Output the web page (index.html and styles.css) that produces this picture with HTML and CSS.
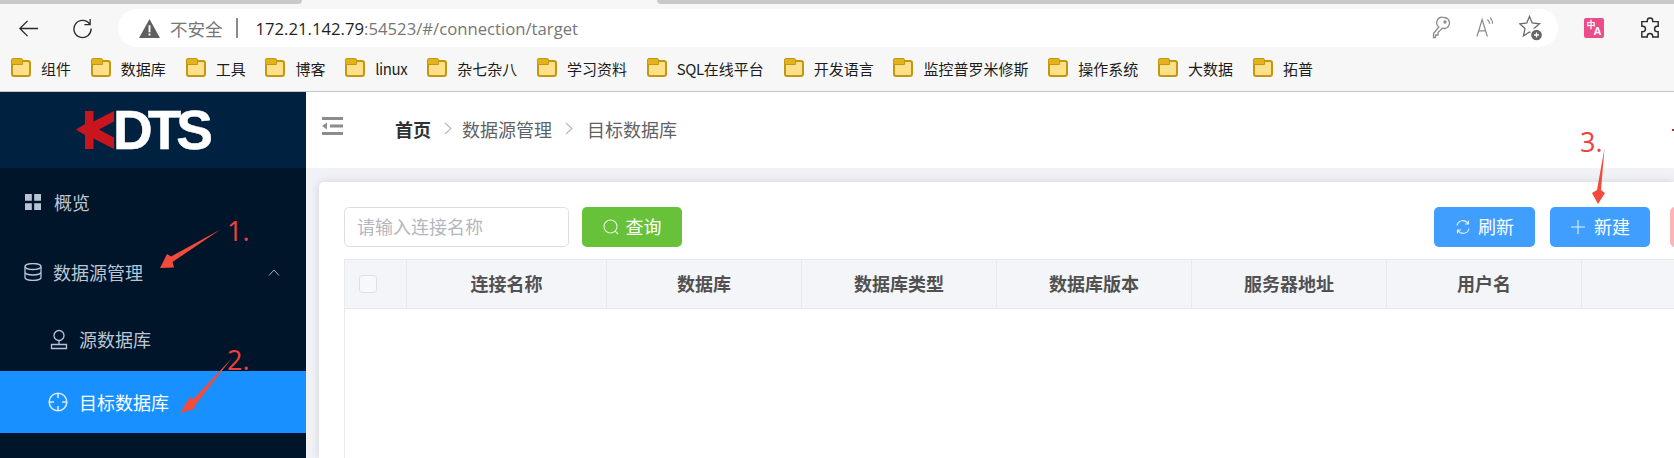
FILE: index.html
```html
<!DOCTYPE html>
<html lang="zh">
<head>
<meta charset="utf-8">
<title>KDTS</title>
<link rel="stylesheet" href="styles.css">
</head>
<body>
<div class="tabstrip"><span class="tab-a"></span><span class="tab-gap"></span><span class="tab-b"></span></div>
<div class="toolbar">
  <svg class="tool back" viewBox="0 0 22 22"><path d="M21 11H2M10 3l-8 8 8 8"/></svg>
  <svg class="tool reload" viewBox="0 0 22 22"><path d="M18.500 6.500A9 9 0 1 0 20 11M19 1v6h-6"/></svg>
  <div class="omnibox">
    <svg class="warn" viewBox="0 0 22 20"><path d="M11 0l11 20H0z" fill="#5f5f5f"/><path d="M10 6.500h2v7.500h-2zM10 15.300h2v2h-2z" fill="#fff"/></svg>
    <span class="insecure">不安全</span>
    <span class="bar"></span>
    <span class="url"><b>172.21.142.79</b>:54523/#/connection/target</span>
    <span class="omni-icons">
      <svg class="o-ic key" viewBox="0 0 18 24"><path d="M12 1.500a5.500 5.500 0 1 1-1.800 10.700L6 16.500v2.500H3.500v2.500H1.500V17.500l5.300-6.500A5.500 5.500 0 0 1 12 1.500z"/><circle cx="13" cy="6" r="1"/></svg>
      <svg class="o-ic aloud" viewBox="0 0 18 24"><path d="M1 21L6.500 3 12 21M3 15h7M12 3a6 6 0 0 1 2.500 4.500M15 1a9 9 0 0 1 2.500 6.500"/></svg>
      <svg class="o-ic fav" viewBox="0 0 24 26"><path d="M10.500 1.500L13.200 8l7.300.8-5.500 4.800 1.600 6.900-6.100-3.500-6.100 3.800L6 13.600.7 8.800 7.800 8z"/><circle cx="17.500" cy="20" r="6" fill="#666" stroke="#fff"/><path d="M17.500 17.500v5M15 20h5" stroke="#fff"/></svg>
    </span>
  </div>
  <span class="translate"><span class="translate-zh">中</span><span class="translate-a">A</span></span>
  <svg class="tool puzzle" viewBox="0 0 22 24"><path d="M8 4a3 3 0 0 1 6 0v1h6v5h-1a3 3 0 0 0 0 6h1v6h-6v-1a3 3 0 0 0-6 0v1H2v-6h1a3 3 0 0 0 0-6H2V5h6z"/></svg>
</div>
<nav class="bookmarks">
  <a class="bm"><span class="folder"></span>组件</a>
  <a class="bm"><span class="folder"></span>数据库</a>
  <a class="bm"><span class="folder"></span>工具</a>
  <a class="bm"><span class="folder"></span>博客</a>
  <a class="bm"><span class="folder"></span><span class="latin">linux</span></a>
  <a class="bm"><span class="folder"></span>杂七杂八</a>
  <a class="bm"><span class="folder"></span>学习资料</a>
  <a class="bm"><span class="folder"></span><span><span class="latin">SQL</span>在线平台</span></a>
  <a class="bm"><span class="folder"></span>开发语言</a>
  <a class="bm"><span class="folder"></span>监控普罗米修斯</a>
  <a class="bm"><span class="folder"></span>操作系统</a>
  <a class="bm"><span class="folder"></span>大数据</a>
  <a class="bm"><span class="folder"></span>拓普</a>
</nav>
<div class="app">
  <aside class="sidebar">
    <div class="logo">
      <svg class="logo-k" viewBox="0 0 39 40"><path d="M9 1h8.500v10.500L38 1v10.500L23 19.500l15 8V39L17.500 28.500V39H9V25L0 19.500 9 14z" fill="#c9151e"/></svg>
      <span class="logo-text">DTS</span>
    </div>
    <ul class="menu">
      <li class="item overview">
        <svg class="m-ic grid" viewBox="0 0 16 16"><path d="M0 0h6.800v6.800H0zM9.200 0H16v6.800H9.200zM0 9.200h6.800V16H0zM9.200 9.200H16V16H9.200z" fill="#b8c4d6"/></svg>
        <span>概览</span>
      </li>
      <li class="item group">
        <svg class="m-ic db" viewBox="0 0 18 18"><ellipse cx="9" cy="3.500" rx="8" ry="3"/><path d="M1 3.500v11c0 1.700 3.600 3 8 3s8-1.300 8-3v-11M1 9c0 1.700 3.600 3 8 3s8-1.300 8-3"/></svg>
        <span>数据源管理</span>
        <svg class="caret" viewBox="0 0 12 7"><path d="M1 6.500L6 1l5 5.500"/></svg>
      </li>
      <li class="item sub">
        <svg class="m-ic stamp" viewBox="0 0 18 21"><circle cx="9" cy="6.500" r="5"/><path d="M9 11.500V15M1.500 15.500h15v4h-15z"/></svg>
        <span>源数据库</span>
      </li>
      <li class="item sub active">
        <svg class="m-ic target" viewBox="0 0 20 20"><circle cx="10" cy="10" r="8.800"/><path d="M10 1v5M10 14v5M1 10h5M14 10h5"/></svg>
        <span>目标数据库</span>
      </li>
    </ul>
  </aside>
  <main class="main">
    <header class="topbar">
      <svg class="fold" viewBox="0 0 21 18"><path d="M0 0h21v3H0zM0 15h21v3H0zM8 7.500h13v3H8zM0 9l5-3.500v7z" fill="#8c8c8c"/></svg>
      <div class="crumbs">
        <strong>首页</strong>
        <svg class="sep sep-first" viewBox="0 0 8 13"><path d="M1 1l6 5.500L1 12"/></svg>
        <span>数据源管理</span>
        <svg class="sep" viewBox="0 0 8 13"><path d="M1 1l6 5.500L1 12"/></svg>
        <span>目标数据库</span>
      </div>
    </header>
    <div class="content">
      <section class="card">
        <div class="actions">
          <div class="search">请输入连接名称</div>
          <button class="btn green">
            <svg class="b-ic" viewBox="0 0 16 16"><circle cx="7.500" cy="7.500" r="6.500"/><path d="M12 12l3 3"/></svg>查询
          </button>
          <span class="spacer"></span>
          <button class="btn blue wide">
            <svg class="b-ic" viewBox="0 0 16 16"><path d="M2 6.500a6 6 0 0 1 11-2M14 9.500a6 6 0 0 1-11 2M13.500 1.500v3.500H10M2.500 14.500V11H6"/></svg>刷新
          </button>
          <button class="btn blue">
            <svg class="b-ic plus" viewBox="0 0 16 16"><path d="M8 1v14M1 8h14"/></svg>新建
          </button>
          <button class="btn pink"></button>
        </div>
        <div class="table">
          <div class="thead">
            <div class="th check"><span class="box"></span></div>
            <div class="th name">连接名称</div>
            <div class="th">数据库</div>
            <div class="th">数据库类型</div>
            <div class="th">数据库版本</div>
            <div class="th">服务器地址</div>
            <div class="th">用户名</div>
            <div class="th"></div>
          </div>
        </div>
      </section>
    </div>
  </main>
</div>
<svg class="marks" viewBox="0 0 1674 458">
  <path class="arrow" d="M220.500 229.500L171 256.500 167 254 160 268 174 267.500 172.500 262z"/>
  <path class="arrow" d="M232 358L193 399.500 190 397 180 413 194 409 196 404z"/>
  <path class="arrow" d="M1604.500 148L1597 190 1592 193 1598 204 1605 193 1601 190z"/>
  <path class="tick" d="M1672 129h2v2h-2z"/>
</svg>
<span class="note n1">1.</span>
<span class="note n2">2.</span>
<span class="note n3">3.</span>
</body>
</html>
```

FILE: styles.css
```css
* { box-sizing: border-box; }
html, body { margin: 0; height: 458px; overflow: hidden; }
body {
  position: relative;
  width: 1674px;
  background: #f7f7f7;
  font-family: "Noto Sans CJK SC", "Noto Sans", sans-serif;
  display: flex;
  flex-direction: column;
}
ul { list-style: none; margin: 0; padding: 0; }

.tabstrip { height: 9px; display: flex; flex: none; }
.tab-a { width: 302px; height: 4px; background: #c9c9c9; border-radius: 0 0 4px 0; }
.tab-gap { width: 355px; }
.tab-b { flex: 1; height: 4px; background: #c9c9c9; border-radius: 0 0 0 4px; }

.toolbar { height: 38px; flex: none; display: flex; align-items: center; position: relative; padding-left: 18px; }
.tool { fill: none; stroke: #2b2b2b; stroke-width: 1.400; flex: none; }
.back { width: 21px; height: 21px; margin-right: 33px; }
.reload { width: 21px; height: 21px; margin-right: 25px; }
.omnibox {
  width: 1440px; height: 38px; background: #fff; border-radius: 19px;
  display: flex; align-items: center; padding-left: 21px; flex: none;
}
.warn { width: 21px; height: 19px; margin-right: 10px; flex: none; }
.insecure { font-size: 17.500px; color: #767676; }
.bar { width: 2px; height: 20px; background: #8a8a8a; margin: 0 18px 0 13px; }
.url { font-family: "Open Sans", sans-serif; font-size: 16.700px; color: #767676; white-space: nowrap; }
.url b { font-weight: 400; color: #1f1f1f; }
.omni-icons { margin-left: auto; display: flex; align-items: center; gap: 26px; padding-right: 15px; }
.o-ic { fill: none; stroke: #8b8b8b; stroke-width: 1.300; flex: none; }
.key { width: 18px; height: 24px; }
.aloud { width: 17px; height: 24px; }
.fav { width: 24px; height: 26px; stroke: #6a6a6a; }
.translate {
  width: 20px; height: 20px; margin-left: 26px; padding: 2px 1px; background: #ec4c89; border-radius: 2px; color: #fff;
  font-size: 9px; line-height: 9px; font-weight: 700; display: flex; justify-content: center; flex: none;
}
.translate-zh { align-self: flex-start; }
.translate-a { align-self: flex-end; font-family: "Liberation Sans", sans-serif; font-size: 11px; margin-left: -2px; }
.puzzle { width: 20px; height: 22px; margin-left: 36px; stroke-width: 1.600; }

.bookmarks { height: 45px; flex: none; display: flex; align-items: center; gap: 19.800px; padding: 0 0 2px 11px; border-bottom: 1px solid #c6c6c6; }
.bm { display: flex; align-items: center; gap: 10px; font-size: 15px; color: #1c1c1c; white-space: nowrap; }
.latin { letter-spacing: -.4px; }
.folder {
  position: relative; width: 20px; height: 17px; background: #ffe08a; border: 2px solid #c3970f; border-radius: 3px; flex: none; margin-top: 1px;
}
.folder::before {
  content: ""; position: absolute; left: -2px; top: -4px; width: 10px; height: 5px; background: #e3b21f; border: 1px solid #c3970f; border-radius: 2px 2px 0 0;
}

.app { flex: 1; display: flex; min-height: 0; }
.sidebar { width: 306px; flex: none; background: #001529; }
.logo { height: 76px; background: #002240; display: flex; align-items: center; padding-left: 76px; }
.logo-k { width: 39px; height: 40px; flex: none; }
.logo-text {
  font-family: "Liberation Sans", sans-serif; font-weight: 700; font-size: 55px; line-height: 40px; color: #fff; letter-spacing: -5px; margin-left: -2px; -webkit-text-stroke: .5px #fff;
}
.menu { padding-top: 4px; }
.item { height: 62px; display: flex; align-items: center; font-size: 18px; color: #bac5d6; position: relative; }
.item.overview { padding: 0 0 2px 25px; }
.item.group { padding-left: 24px; margin: 7px 0 6px; }
.item.sub { padding: 0 0 2px 50px; }
.item.active { background: #1890ff; color: #fff; padding: 0 0 0 48px; }
.m-ic { flex: none; fill: none; stroke: #b8c4d6; stroke-width: 1.300; }
.grid { width: 16px; height: 16px; margin-right: 13px; stroke: none; }
.db { width: 18px; height: 18px; margin-right: 11px; }
.stamp { width: 18px; height: 21px; margin-right: 11px; }
.target { width: 20px; height: 20px; margin-right: 11px; stroke: #d6e9ff; stroke-width: 1.600; }
.caret { position: absolute; left: 268px; top: 28px; width: 12px; height: 7px; fill: none; stroke: #a7b1c2; stroke-width: 1; }

.main { flex: 1; display: flex; flex-direction: column; min-width: 0; background: #f0f2f5; }
.topbar { height: 76px; flex: none; background: #fff; display: flex; padding-left: 16px; position: relative; }
.fold { width: 21px; height: 18px; margin-top: 25px; flex: none; }
.crumbs { display: flex; align-items: center; margin-left: 52px; height: 76px; padding-bottom: 3px; font-size: 18px; color: #606266; }
.crumbs strong { color: #303133; font-weight: 700; }
.sep { width: 8px; height: 13px; margin: 0 14px 0 13px; fill: none; stroke: #b4b7bd; stroke-width: 1.100; }
.sep-first { margin: 0 10px 0 13px; }

.content { flex: 1; min-height: 0; padding: 14px 0 0 13px; }
.card { height: 100%; background: #fff; border-radius: 5px 0 0 0; padding: 25px 0 0 25px; box-shadow: 0 0 10px rgba(0,0,0,.13); overflow: hidden; }
.actions { display: flex; align-items: center; height: 40px; width: 1426px; }
.search {
  width: 225px; height: 40px; border: 1px solid #dcdfe6; border-radius: 5px; padding-left: 12px;
  font-size: 18px; line-height: 36px; color: #b4b7bd; flex: none;
}
.btn {
  height: 40px; width: 100px; border: 0; border-radius: 5px; color: #fff; font: inherit; font-size: 18px;
  display: flex; align-items: center; justify-content: center; padding: 0 0 3px; flex: none;
}
.green { background: #67c23a; margin-left: 13px; }
.blue { background: #409eff; margin-right: 15px; }
.wide { width: 101px; }
.pink { background: #fab6b6; margin-left: 5px; }
.spacer { flex: 1; }
.b-ic { width: 16px; height: 16px; margin: 3px 7px 0 0; fill: none; stroke: #fff; stroke-width: 1.100; opacity: .85; flex: none; }
.plus { margin-right: 8px; }

.table { margin-top: 12px; height: 300px; border-left: 1px solid #e8eaf0; }
.thead { display: flex; height: 50px; background: #f4f5f9; border-top: 1px solid #e8eaf0; border-bottom: 1px solid #e8eaf0; }
.th {
  width: 195px; flex: none; display: flex; align-items: center; justify-content: center; padding-bottom: 3px;
  border-right: 1px solid #e8eaf0; font-size: 18px; font-weight: 700; color: #515151;
}
.th.check { width: 62px; padding: 0 16px 0 0; }
.th.name { width: 200px; }
.box { width: 18px; height: 18px; border: 1px solid #dcdfe6; border-radius: 3px; background: #f7f8fa; }

.marks { position: absolute; left: 0; top: 0; width: 1674px; height: 458px; pointer-events: none; }
.arrow { fill: #f44a3c; }
.tick { fill: #a8343c; }
.note { position: absolute; font-family: "Open Sans", sans-serif; font-size: 27px; line-height: 30px; color: #f0403c; }
.n1 { left: 227px; top: 216px; }
.n2 { left: 227px; top: 345px; }
.n3 { left: 1580px; top: 127px; }
```
